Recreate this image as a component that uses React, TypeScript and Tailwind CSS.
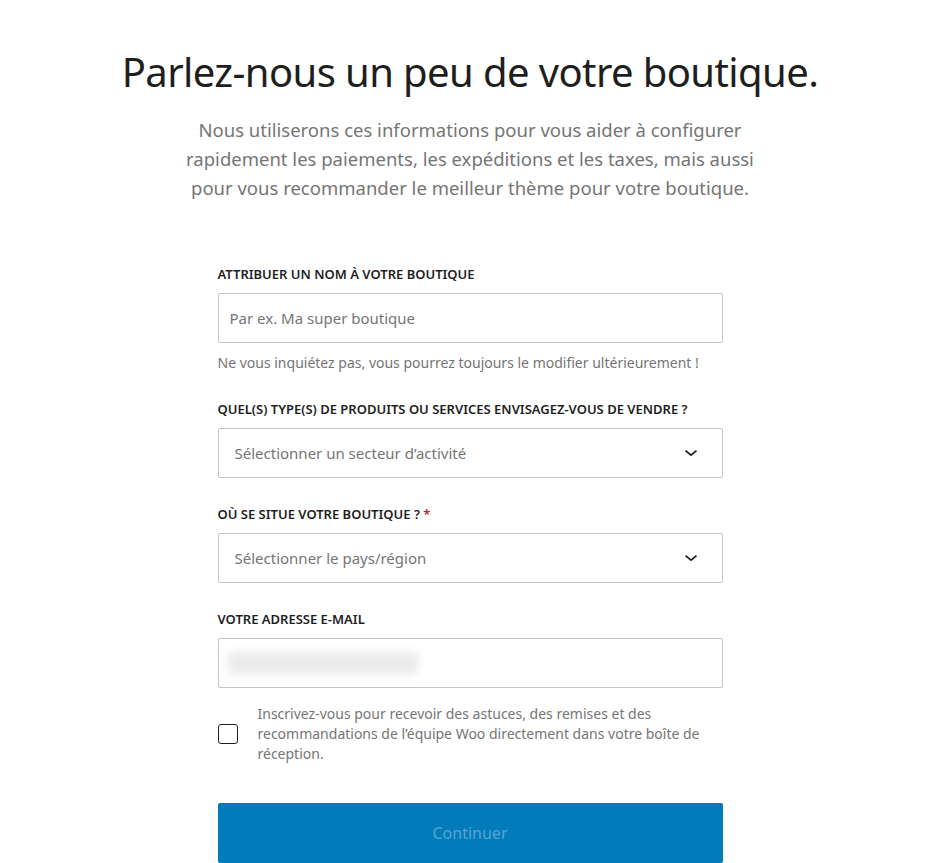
import React from "react";

const font = { fontFamily: '"Noto Sans", "Open Sans", sans-serif' };

function Chevron() {
  return (
    <svg width="24" height="24" viewBox="0 0 24 24" className="text-[#1e1e1e]">
      <path d="M17.5 11.6 L12 16.1 L6.5 11.6" transform="translate(0,-2)" fill="none" stroke="currentColor" strokeWidth="1.8" />
    </svg>
  );
}

function Label({ children }: { children: React.ReactNode }) {
  return (
    <div className="text-[13px] leading-[20px] font-semibold uppercase text-[#1e1e1e]">{children}</div>
  );
}

export default function App() {
  return (
    <div style={font} className="min-h-[863px] w-full bg-white flex flex-col items-center pr-[5px]">
      <h1 className="mt-[48px] text-[40px] leading-[48px] font-normal text-[#1e1e1e] tracking-[-0.6px]">
        Parlez-nous un peu de votre boutique.
      </h1>
      <p className="mt-[19px] max-w-[580px] text-center text-[18.5px] leading-[29px] text-[#757575]">
        Nous utiliserons ces informations pour vous aider à configurer rapidement les paiements, les expéditions et les taxes, mais aussi pour vous recommander le meilleur thème pour votre boutique.
      </p>

      <div className="mt-[62px] w-[505px] flex flex-col">
        <Label>Attribuer un nom à votre boutique</Label>
        <div className="mt-[9px] h-[50px] border border-[#c3c4c7] rounded-[2px] flex items-center px-[11px] text-[15px] text-[#757575]">
          Par ex. Ma super boutique
        </div>
        <div className="mt-[10px] text-[14px] leading-[20px] text-[#757575]">
          Ne vous inquiétez pas, vous pourrez toujours le modifier ultérieurement !
        </div>

        <div className="mt-[26px]">
          <Label>Quel(s) type(s) de produits ou services envisagez-vous de vendre ?</Label>
        </div>
        <div className="mt-[9px] h-[50px] border border-[#c3c4c7] rounded-[2px] flex items-center justify-between pl-[16px] pr-[19px] text-[15px] text-[#757575]">
          <span>Sélectionner un secteur d’activité</span>
          <Chevron />
        </div>

        <div className="mt-[26px]">
          <Label>
            Où se situe votre boutique ? <span className="text-[#cc1818]">*</span>
          </Label>
        </div>
        <div className="mt-[9px] h-[50px] border border-[#c3c4c7] rounded-[2px] flex items-center justify-between pl-[16px] pr-[19px] text-[15px] text-[#757575]">
          <span>Sélectionner le pays/région</span>
          <Chevron />
        </div>

        <div className="mt-[26px]">
          <Label>Votre adresse e-mail</Label>
        </div>
        <div className="mt-[9px] h-[50px] border border-[#c3c4c7] rounded-[2px] flex items-center px-[9px] overflow-hidden">
          <div className="h-[22px] w-[190px] bg-[#ebebeb] blur-[4px] rounded-sm" />
        </div>

        <div className="mt-[16px] flex items-center">
          <div className="w-[20px] h-[20px] shrink-0 border-[1.5px] border-[#1e1e1e] rounded-[3px]" />
          <div className="ml-[20px] text-[14px] leading-[20px] text-[#757575]">
            Inscrivez-vous pour recevoir des astuces, des remises et des recommandations de l’équipe Woo directement dans votre boîte de réception.
          </div>
        </div>

        <button className="mt-[39px] h-[60px] w-full rounded-[2px] bg-[#007cba] text-[16px] text-[#5ba3d0]">
          Continuer
        </button>
      </div>
    </div>
  );
}
